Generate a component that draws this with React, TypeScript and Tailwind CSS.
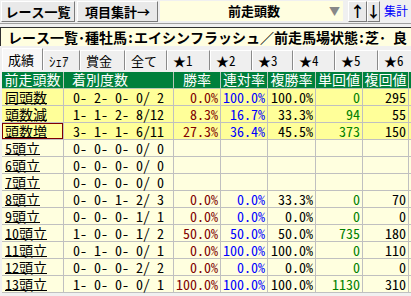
const rows = [
  { name: "同頭数", hl: true, rec: "0- 2- 0- 0/ 2", win: "0.0%", ren: "100.0%", fuku: "100.0%", tan: "0", fk: "295" },
  { name: "頭数減", hl: true, rec: "1- 1- 2- 8/12", win: "8.3%", ren: "16.7%", fuku: "33.3%", tan: "94", fk: "55" },
  { name: "頭数増", hl: true, sel: true, rec: "3- 1- 1- 6/11", win: "27.3%", ren: "36.4%", fuku: "45.5%", tan: "373", fk: "150" },
  { name: "5頭立", rec: "0- 0- 0- 0/ 0", win: "", ren: "", fuku: "", tan: "", fk: "" },
  { name: "6頭立", rec: "0- 0- 0- 0/ 0", win: "", ren: "", fuku: "", tan: "", fk: "" },
  { name: "7頭立", rec: "0- 0- 0- 0/ 0", win: "", ren: "", fuku: "", tan: "", fk: "" },
  { name: "8頭立", rec: "0- 0- 1- 2/ 3", win: "0.0%", ren: "0.0%", fuku: "33.3%", tan: "0", fk: "70" },
  { name: "9頭立", rec: "0- 0- 0- 1/ 1", win: "0.0%", ren: "0.0%", fuku: "0.0%", tan: "0", fk: "0" },
  { name: "10頭立", rec: "1- 0- 0- 1/ 2", win: "50.0%", ren: "50.0%", fuku: "50.0%", tan: "735", fk: "180" },
  { name: "11頭立", rec: "0- 1- 0- 0/ 1", win: "0.0%", ren: "100.0%", fuku: "100.0%", tan: "0", fk: "110" },
  { name: "12頭立", rec: "0- 0- 0- 2/ 2", win: "0.0%", ren: "0.0%", fuku: "0.0%", tan: "0", fk: "0" },
  { name: "13頭立", rec: "1- 0- 0- 0/ 1", win: "100.0%", ren: "100.0%", fuku: "100.0%", tan: "1130", fk: "310" },
];

const tabs = [
  { label: "成績", w: "w-[41px]" },
  { label: "ｼｪｱ", w: "w-[37px]" },
  { label: "賞金", w: "w-[45px]" },
  { label: "全て", w: "w-[42px]" },
  { label: "★1", w: "w-[43px]" },
  { label: "★2", w: "w-[42px]" },
  { label: "★3", w: "w-[41px]" },
  { label: "★4", w: "w-[42px]" },
  { label: "★5", w: "w-[43px]" },
  { label: "★6", w: "w-[42px]" },
];

const headers = ["前走頭数", "着別度数", "勝率", "連対率", "複勝率", "単回値", "複回値", ""];

const cols = "grid grid-cols-[62px_110px_47px_47px_48px_47px_46px_47px]";

function Bevel({ children, className }: { children: React.ReactNode; className?: string }) {
  return (
    <div
      className={
        "shrink-0 flex items-center justify-center whitespace-nowrap bg-[#e9e9e9] border border-t-white border-l-white border-r-[#7a7a7a] border-b-[#7a7a7a] " +
        (className ?? "")
      }
    >
      {children}
    </div>
  );
}

export default function App() {
  return (
    <div className="w-[411px] h-[296px] overflow-hidden bg-[#f0f0f0] font-['Noto_Sans_Mono_CJK_JP','Noto_Sans_CJK_JP',monospace] text-black">
      {/* top bar */}
      <div className="flex h-[23px] items-start pt-[1px] pl-[1px] whitespace-nowrap">
        <Bevel className="w-[74px] h-[21px] text-[13px] font-bold">レース一覧</Bevel>
        <Bevel className="ml-[2px] w-[81px] h-[21px] text-[13px] font-bold">項目集計→</Bevel>
        <div className="shrink-0 ml-[2px] w-[183px] h-[20px] bg-[#fffee0] flex items-center">
          <span className="ml-[68px] text-[13px] font-bold">前走頭数</span>
          <span className="ml-auto mr-[3px] text-[11px] text-[#888888]">▼</span>
        </div>
        <Bevel className="ml-[5px] w-[19px] h-[21px] text-[15px] font-bold">↑</Bevel>
        <Bevel className="w-[13px] h-[21px] text-[15px] font-bold">↓</Bevel>
        <span className="shrink-0 ml-[4px] mt-[2px] text-[12px] leading-[16px] text-[#0000ff]">集計</span>
      </div>

      {/* title */}
      <div className="h-[25px] pt-[3px] border-t border-[#a0a0a0]">
        <div className="h-[19px] bg-[#fffee0] border-t border-l border-[#303030] pl-[7px] flex items-center whitespace-nowrap text-[14px] font-bold leading-none">
          レース一覧･種牡馬:エイシンフラッシュ／前走馬場状態:芝･ 良
        </div>
      </div>

      {/* tabs */}
      <div className="flex h-[22px] items-end pl-[2px] whitespace-nowrap">
        {tabs.map((t, i) => (
          <div
            key={t.label}
            className={
              t.w +
              " shrink-0 text-[13px] leading-none pl-[5px] flex items-center " +
              (i === 0
                ? "h-[22px] bg-[#f7f7f7] border-t border-l border-white border-r border-r-[#8a8a8a]"
                : "h-[20px] bg-[#efefef] border-t border-t-white border-r border-r-[#8a8a8a] border-l border-l-white")
            }
          >
            {t.label}
          </div>
        ))}
      </div>

      {/* table */}
      <div className="mt-[2px] ml-[2px] bg-white">
        <div className={cols + " h-[17px] bg-[#00803c] text-white text-[14px] leading-[15px]"}>
          {headers.map((h, i) => (
            <div
              key={i}
              className={
                "border-r border-b border-[#b8c8b8] whitespace-nowrap overflow-hidden " +
                (i === 1 ? "pl-[8px]" : "text-center")
              }
            >
              {h}
            </div>
          ))}
        </div>
        {rows.map((r) => (
          <div
            key={r.name}
            className={
              cols +
              " h-[17px] text-[14px] leading-[14px] whitespace-nowrap " +
              (r.hl ? "bg-[#ffff99]" : "bg-[#ffffdf]")
            }
          >
            <div className="border-r border-b border-[#c0c0c0] relative pl-[3px] pt-[1px]">
              <span className="underline underline-offset-[0px]">{r.name}</span>
              {r.sel && <div className="absolute inset-0 border-[1.5px] border-[#800000]" />}
            </div>
            <div className="border-r border-b border-[#c0c0c0] text-center pt-[1px]">{r.rec}</div>
            <div className="border-r border-b border-[#c0c0c0] text-right pr-[2px] pt-[1px] text-[#800000]">{r.win}</div>
            <div className="border-r border-b border-[#c0c0c0] text-right pr-[2px] pt-[1px] text-[#0000ff]">{r.ren}</div>
            <div className="border-r border-b border-[#c0c0c0] text-right pr-[2px] pt-[1px]">{r.fuku}</div>
            <div className="border-r border-b border-[#c0c0c0] text-right pr-[2px] pt-[1px] text-[#008000]">{r.tan}</div>
            <div className="border-r border-b border-[#c0c0c0] text-right pr-[2px] pt-[1px]">{r.fk}</div>
            <div className="border-r border-b border-[#c0c0c0]" />
          </div>
        ))}
      </div>
    </div>
  );
}
